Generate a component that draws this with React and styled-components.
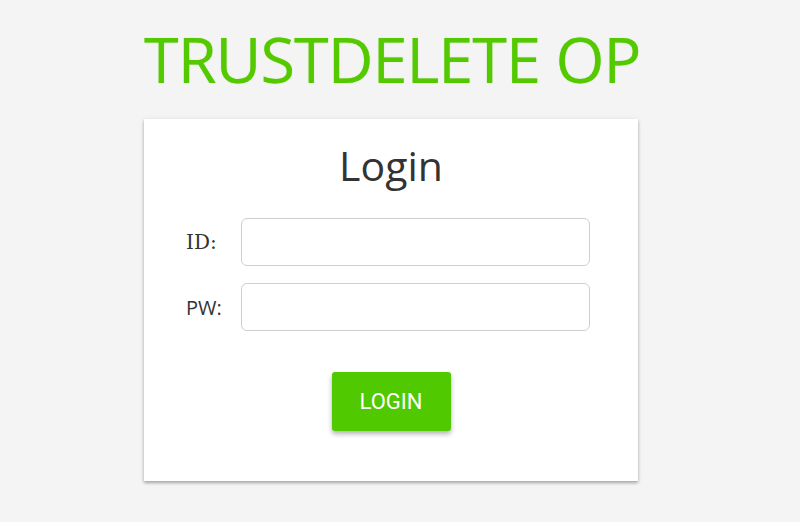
import React from "react";
import styled, { createGlobalStyle } from "styled-components";

const GlobalStyle = createGlobalStyle`
  html, body {
    margin: 0;
    padding: 0;
    background: #f4f4f4;
    font-family: "Open Sans", "Noto Sans", sans-serif;
  }
`;

const Page = styled.div`
  width: 800px;
  height: 522px;
  padding-left: 144px;
  box-sizing: border-box;
  overflow: hidden;
`;

const Column = styled.div`
  width: 494px;
  display: flex;
  flex-direction: column;
`;

const Brand = styled.h1`
  margin: 0;
  padding-top: 21px;
  height: 119px;
  box-sizing: border-box;
  font-family: "Open Sans", "Noto Sans", sans-serif;
  font-weight: 400;
  font-size: 63px;
  line-height: 1.2;
  letter-spacing: -1px;
  color: #55c900;
  white-space: nowrap;
  text-shadow: 0 0 1px rgba(85, 201, 0, 0.6);
`;

const Card = styled.div`
  background: #fff;
  height: 362px;
  box-sizing: border-box;
  padding: 23px 48px 0 42px;
  box-shadow: 0 2px 3px rgba(0, 0, 0, 0.3), 0 0 6px rgba(0, 0, 0, 0.06);
  display: flex;
  flex-direction: column;
`;

const Heading = styled.h2`
  margin: 0 0 29px 0;
  text-align: center;
  font-family: "Open Sans", "Noto Sans", sans-serif;
  font-weight: 400;
  font-size: 41px;
  line-height: 47px;
  color: #333;
  padding-left: 6px;
`;

const Field = styled.div`
  display: flex;
  align-items: center;
  margin-bottom: 17px;
`;

const Label = styled.label`
  width: 55px;
  font-family: ${(p) => (p.serif ? `"DejaVu Serif", serif` : `"Open Sans", sans-serif`)};
  font-size: 20px;
  color: #333;
`;

const Input = styled.input`
  flex: 1;
  height: 48px;
  box-sizing: border-box;
  border: 1px solid #cfcfcf;
  border-radius: 6px;
  padding: 0 12px;
  font-size: 16px;
  outline: none;
`;

const Actions = styled.div`
  display: flex;
  justify-content: center;
  padding-top: 24px;
  padding-left: 6px;
`;

const Button = styled.button`
  width: 119px;
  height: 59px;
  border: none;
  border-radius: 3px;
  background: #50c900;
  color: #fff;
  font-family: Roboto, sans-serif;
  font-size: 22px;
  font-weight: 400;
  box-shadow: 0 3px 5px rgba(0, 0, 0, 0.3);
  cursor: pointer;
`;

export default function App() {
  return (
    <>
      <GlobalStyle />
      <Page>
        <Column>
          <Brand>TRUSTDELETE OP</Brand>
          <Card>
            <Heading>Login</Heading>
            <Field>
              <Label serif>ID:</Label>
              <Input type="text" />
            </Field>
            <Field>
              <Label>PW:</Label>
              <Input type="password" />
            </Field>
            <Actions>
              <Button>LOGIN</Button>
            </Actions>
          </Card>
        </Column>
      </Page>
    </>
  );
}
